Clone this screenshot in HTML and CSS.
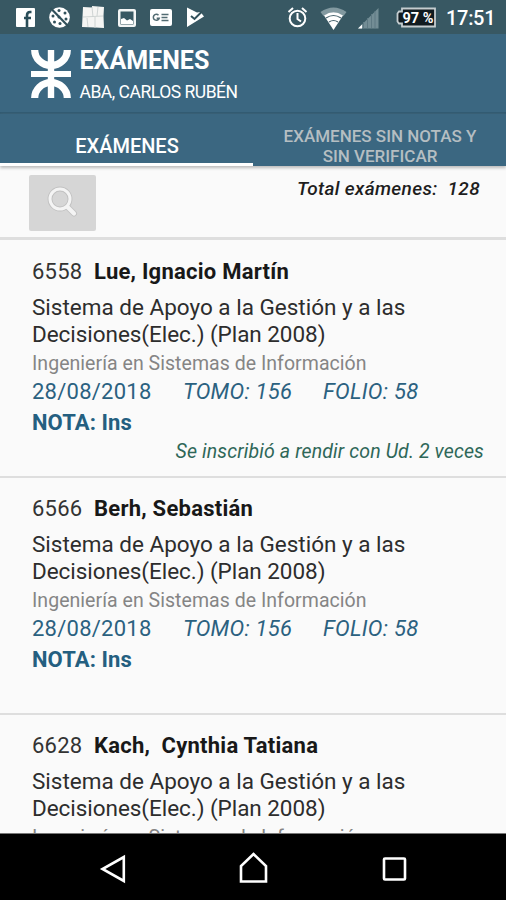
FILE: index.html
```html
<!DOCTYPE html>
<html lang="es">
<head>
<meta charset="utf-8">
<title>Exámenes</title>
<link rel="stylesheet" href="styles.css">
</head>
<body>
<div class="screen">
  <header class="status">
    <svg class="status-left" width="210" height="34" viewBox="0 0 210 34">
      <rect x="16" y="8" width="19" height="19" rx="1" fill="#fff"/>
      <path d="M31.500 12h-1.500q-3 0-3 3.500V27M24 18h7" fill="none" stroke="#294d58" stroke-width="2.600"/>
      <circle cx="59.500" cy="17.500" r="10.300" fill="#fff"/>
      <g fill="#31515b"><circle cx="59" cy="10.500" r="1.500"/><circle cx="65" cy="13" r="1.500"/><circle cx="53" cy="16" r="1.500"/><circle cx="66" cy="19" r="1.500"/><circle cx="54.500" cy="22" r="1.500"/><circle cx="60" cy="23.500" r="1.500"/><circle cx="59" cy="17" r="1.500"/></g>
      <path d="M50.500 8L69 27" stroke="#31515b" stroke-width="2.200"/>
      <path d="M83 7l9 .5V6l12 1-.5 9 .5 12-9-.5-13-.5.500-10z" fill="#f5f5f3"/>
      <path d="M92 7l1 10M83 17l20-1M95 17v11M87 18l1 9M98 7l-1 9" fill="none" stroke="#cbd0cf" stroke-width=".9"/>
      <path fill-rule="evenodd" d="M120 9h14q2 0 2 2v14q0 2-2 2h-14q-2 0-2-2V11q0-2 2-2zm.5 2.500v13h13v-13z" fill="#f3f5f5"/>
      <path d="M121 19l3-1 3 2.500 3-1.500 3 2V24h-12z" fill="#fff"/>
      <rect x="150" y="9" width="22" height="17" rx="2" fill="#fff"/>
      <path d="M158.500 15.200a3 3 0 1 0 .7 3h-2.500M161.500 14.500h7M161.500 17.500h6M161.500 20.500h7" fill="none" stroke="#526b72" stroke-width="1.500"/>
      <path d="M187 7.500l10 5 3.500-.5 3.500 4.500-17 10.500z" fill="#fff"/>
      <path d="M191 16l3.500 3 7.500-7.500" fill="none" stroke="#31515b" stroke-width="2"/>
    </svg>
    <svg class="status-right" width="160" height="34" viewBox="285 0 160 34">
      <g fill="none" stroke="#fff" stroke-width="2"><circle cx="297.500" cy="18.500" r="7.800"/><path d="M297.500 13v6l3.500 2.500M288.500 12l4.500-4M306.500 12L302 8"/></g>
      <path d="M320.500 12Q333.500 3 346.500 12l-3 4Q333.500 9 323.500 16z" fill="#8299a0"/>
      <path d="M324 15.500Q333.500 9 343 15.500L333.500 30z" fill="#fff"/>
      <path d="M326 18q7.500-5 15 0M329 22q4.500-3 9 0" fill="none" stroke="#47636d" stroke-width="1.200"/>
      <path d="M358 28.500L378.500 8v20.500z" fill="#738d95"/><path d="M358 28.500l4-4v4z" fill="#fff"/>
      <path d="M363.500 22v6M367.500 18v10M371.500 14v14M375 11v17" stroke="#5e7983"/>
      <path d="M402 8.500h33v18h-33v-3h-3l-1.500-2v-8l1.500-2h3z" fill="#111b20" stroke="#c5cdd0" stroke-width="1.800"/>
      <text class="battery" x="402.500" y="22.800" textLength="31" lengthAdjust="spacingAndGlyphs">97 %</text>
    </svg>
    <span class="clock">17:51</span>
  </header>
  <div class="appbar">
    <svg class="logo" width="40" height="48" viewBox="0 0 40 48">
      <g fill="none" stroke="#fff"><path d="M3.700 0A16.300 15.500 0 0 0 36.300 0M3.700 48A16.300 15.500 0 0 1 36.300 48" stroke-width="7.200"/><path d="M20 0v48" stroke-width="6.400"/><path d="M0 24h40" stroke-width="6"/></g>
    </svg>
    <div><h1><span class="t-title">EXÁMENES</span></h1><p class="user"><span class="t-user">ABA, CARLOS RUBÉN</span></p></div>
  </div>
  <nav class="tabs">
    <div class="tab active"><span class="t-tab">EXÁMENES</span></div>
    <div class="tab"><span class="t-tab1">EXÁMENES SIN NOTAS Y</span><br><span class="t-tab2">SIN VERIFICAR</span></div>
  </nav>
  <div class="tools">
    <button class="search" aria-label="Buscar"><svg width="32" height="34" viewBox="0 0 32 34"><g fill="none"><circle cx="13" cy="13" r="10" stroke="#c1c1c1" stroke-width="4.800"/><path d="M20.500 21l6.500 6.500" stroke="#c1c1c1" stroke-width="6" stroke-linecap="round"/><circle cx="13" cy="13" r="10" stroke="#f4f4f4" stroke-width="3"/><path d="M20.500 21l6.500 6.500" stroke="#f4f4f4" stroke-width="4.200" stroke-linecap="round"/></g></svg></button>
    <p class="total"><span class="t-total">Total exámenes:  128</span></p>
  </div>
  <main class="list">
    <article class="exam">
      <p class="student"><span class="id">6558</span><b class="n1">Lue, Ignacio Martín</b></p>
      <p class="subject"><span class="s1">Sistema de Apoyo a la Gestión y a las</span><br><span class="s2">Decisiones(Elec.) (Plan 2008)</span></p>
      <p class="degree"><span class="t-degree">Ingeniería en Sistemas de Información</span></p>
      <p class="record"><span class="date">28/08/2018</span><i class="tomo">TOMO: 156</i><i class="folio">FOLIO: 58</i></p>
      <p class="grade"><span class="t-grade">NOTA: Ins</span></p>
      <p class="times"><span class="t-times">Se inscribió a rendir con Ud. 2 veces</span></p>
    </article>
    <article class="exam">
      <p class="student"><span class="id">6566</span><b class="n2">Berh, Sebastián</b></p>
      <p class="subject"><span class="s1">Sistema de Apoyo a la Gestión y a las</span><br><span class="s2">Decisiones(Elec.) (Plan 2008)</span></p>
      <p class="degree"><span class="t-degree">Ingeniería en Sistemas de Información</span></p>
      <p class="record"><span class="date">28/08/2018</span><i class="tomo">TOMO: 156</i><i class="folio">FOLIO: 58</i></p>
      <p class="grade"><span class="t-grade">NOTA: Ins</span></p>
    </article>
    <article class="exam">
      <p class="student"><span class="id">6628</span><b class="n3">Kach,  Cynthia Tatiana</b></p>
      <p class="subject"><span class="s1">Sistema de Apoyo a la Gestión y a las</span><br><span class="s2">Decisiones(Elec.) (Plan 2008)</span></p>
      <p class="degree"><span class="t-degree">Ingeniería en Sistemas de Información</span></p>
    </article>
  </main>
  <footer class="navbar">
    <svg width="506" height="66" viewBox="0 0 506 66" fill="none" stroke="#fff" stroke-width="2.600"><path d="M123.800 23v24L102.500 35z"/><path d="M241 47.500V32l12.500-12L266 32v15.500z"/><rect x="384" y="24.500" width="21" height="21" rx="1"/></svg>
  </footer>
</div>
</body>
</html>
```
FILE: styles.css
```css
* { box-sizing: border-box; }
body, h1, p { margin: 0; }
body { font-family: Roboto, sans-serif; background: #fafafa; }
.screen { width: 506px; height: 900px; display: flex; flex-direction: column; overflow: hidden; }
.screen span, .screen b, .screen i { white-space: pre; }
svg { display: block; flex: none; }
.status { height: 34px; flex: none; display: flex; background: #385863; color: #fff; }
.status-right { margin-left: 75px; }
.battery { font: 700 15.500px Roboto, sans-serif; fill: #fff; }
.clock { font-size: 20px; font-weight: 500; line-height: 36px; letter-spacing: -.3px; margin-left: 1px; }
.appbar { height: 80px; flex: none; display: flex; padding: 16px 0 0 31px; background: #3b6781; color: #fff; border-bottom: 2px solid #315a71; }
.appbar .logo { margin-right: 8.500px; }
h1 { font-size: 25px; line-height: 28px; font-weight: 700; margin-top: -3px; }
.user { font-size: 17.500px; line-height: 22px; letter-spacing: -.48px; margin-top: 6px; }
.tabs { height: 52px; flex: none; display: grid; grid-template-columns: 253px 253px; background: #3b6781; position: relative; box-shadow: 0 2px 3px #bbb; }
.tab { color: #b5bec2; font-size: 17px; font-weight: 500; line-height: 19.500px; text-align: center; padding: 13px 0 0 1px; }
.tab.active { color: #fff; font-size: 20px; line-height: 24px; padding-top: 20px; border-bottom: 3px solid #fff; }
.tools { height: 74px; flex: none; display: flex; justify-content: space-between; padding: 9px 26px 0 29px; border-bottom: 3px solid #dedede; }
.search { width: 67px; height: 56px; border: 0; border-radius: 2px; background: #d6d6d6; padding: 0 0 0 18px; }
.total { font-size: 19px; line-height: 28px; letter-spacing: .34px; font-style: italic; font-weight: 500; color: #1e1e1e; }
.list { flex: 1; min-height: 0; overflow: hidden; }
.exam { height: 237px; padding: 17px 22px 0 32px; border-bottom: 2px solid #dedede; }
.exam:first-child { height: 238px; padding-top: 18px; }
.student { display: grid; grid-template-columns: 62px 1fr; font-size: 22px; line-height: 28px; color: #181818; }
.id { color: #333; letter-spacing: .25px; }
.student b { font-weight: 700; letter-spacing: .24px; }
.subject { font-size: 22.500px; line-height: 27px; color: #2d2d2d; margin-top: 8px; }
.s2 { letter-spacing: -.05px; }
.degree { font-size: 19.500px; line-height: 26px; letter-spacing: .04px; color: #858585; margin-top: 3px; }
.record { display: grid; grid-template-columns: 151px 140px 1fr; font-size: 22px; line-height: 28px; letter-spacing: .25px; color: #2b6180; margin-top: 1px; }
.grade { font-size: 22px; line-height: 28px; letter-spacing: .1px; font-weight: 700; color: #245f80; margin-top: 3px; }
.times { font-size: 19.500px; line-height: 26px; letter-spacing: .13px; font-style: italic; text-align: right; color: #2e6758; margin-top: 2px; }
.navbar { height: 67px; flex: none; background: #000; border-top: 1px solid #777; }
```
